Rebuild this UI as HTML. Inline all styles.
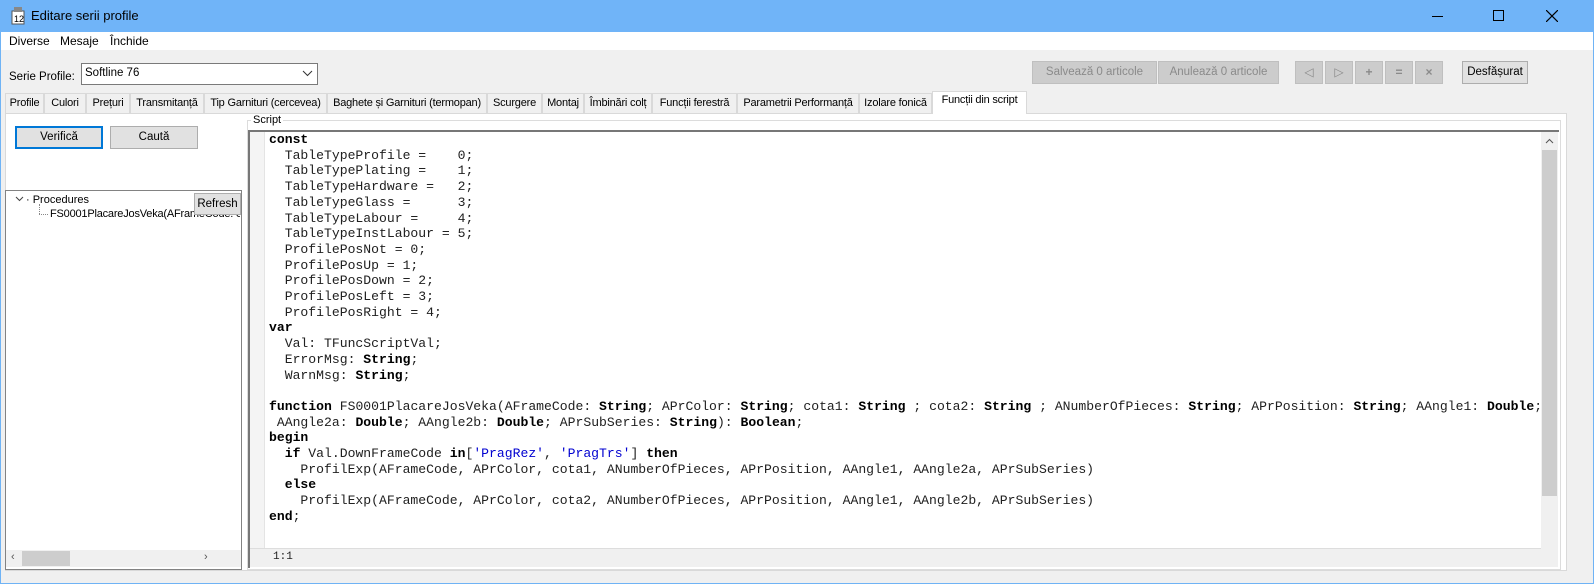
<!DOCTYPE html>
<html><head><meta charset="utf-8"><style>
*{box-sizing:border-box;margin:0;padding:0}
body{width:1594px;height:584px;overflow:hidden;background:#f0f0f0;font-family:"Liberation Sans",sans-serif;font-size:12px;color:#000;position:relative}
.abs{position:absolute}
.win{left:0;top:0;width:1594px;height:584px;border:1px solid #6fb3f5}
.title{left:0;top:0;width:1594px;height:32px;background:#70b4f8}
.menu{left:1px;top:32px;width:1592px;height:18px;background:#fff}
.btn{position:absolute;background:#e1e1e1;border:1px solid #adadad;text-align:center;line-height:20px;font-size:12px}
.dis{background:#cccccc;border-color:#bfbfbf;color:#8a8a8a}
.tab{position:absolute;top:93px;height:20px;border:1px solid #d9d9d9;border-bottom:none;background:#f0f0f0;line-height:19px;text-align:center;font-size:11px;letter-spacing:-0.2px;white-space:nowrap;overflow:hidden}
pre{font-family:"Liberation Mono",monospace;font-size:13.1px;line-height:15.7px;color:#202020}
b{color:#000}
.s{color:#0000d0}
</style></head><body>
<div class="abs win"></div>
<div class="abs title"></div>
<svg class="abs" style="left:11px;top:6px" width="14" height="19"><rect x="1" y="5" width="12" height="13" fill="#fff" stroke="#555"/><rect x="3" y="1" width="8" height="5" fill="#888"/><text x="3" y="16" font-size="9" font-family="Liberation Sans">12</text></svg>
<div class="abs" style="left:31px;top:8px;font-size:13px">Editare serii profile</div>
<div class="abs" style="left:1432px;top:16px;width:11px;height:1px;background:#000"></div>
<div class="abs" style="left:1493px;top:10px;width:11px;height:11px;border:1px solid #000"></div>
<svg class="abs" style="left:1546px;top:10px" width="12" height="12"><path d="M0 0L12 12M12 0L0 12" stroke="#000" stroke-width="1.2"/></svg>
<div class="abs menu"></div>
<div class="abs" style="left:9px;top:34px;font-size:12px">Diverse</div>
<div class="abs" style="left:60px;top:34px;font-size:12px">Mesaje</div>
<div class="abs" style="left:110px;top:34px;font-size:12px">Închide</div>

<div class="abs" style="left:9px;top:71px;font-size:11.5px">Serie Profile:</div>
<div class="abs" style="left:81px;top:63px;width:237px;height:22px;background:#fff;border:1px solid #7a7a7a;padding:3px 3px;font-size:11.5px">Softline 76</div>
<svg class="abs" style="left:302px;top:70px" width="11" height="7"><path d="M1 1L5.5 5.5L10 1" stroke="#333" fill="none"/></svg>

<div class="btn dis" style="left:1032px;top:61px;width:125px;height:23px;font-size:11.5px">Salvează 0 articole</div>
<div class="btn dis" style="left:1158px;top:61px;width:121px;height:23px;font-size:11.5px">Anulează 0 articole</div>
<div class="btn dis" style="left:1295px;top:61px;width:28px;height:23px">◁</div>
<div class="btn dis" style="left:1325px;top:61px;width:28px;height:23px">▷</div>
<div class="btn dis" style="left:1355px;top:61px;width:28px;height:23px;font-weight:bold">+</div>
<div class="btn dis" style="left:1385px;top:61px;width:28px;height:23px;font-weight:bold">=</div>
<div class="btn dis" style="left:1415px;top:61px;width:28px;height:23px;font-weight:bold">×</div>
<div class="btn" style="left:1462px;top:61px;width:66px;height:23px;font-size:11.5px">Desfășurat</div>

<div class="abs" style="left:5px;top:113px;width:1562px;height:458px;background:#fff;border:1px solid #d9d9d9"></div>
<div class="tab" style="left:5px;width:39px">Profile</div>
<div class="tab" style="left:44px;width:42px">Culori</div>
<div class="tab" style="left:86px;width:44px">Prețuri</div>
<div class="tab" style="left:130px;width:74px">Transmitanță</div>
<div class="tab" style="left:204px;width:123px">Tip Garnituri (cercevea)</div>
<div class="tab" style="left:327px;width:160px">Baghete și Garnituri (termopan)</div>
<div class="tab" style="left:487px;width:55px">Scurgere</div>
<div class="tab" style="left:542px;width:42px">Montaj</div>
<div class="tab" style="left:584px;width:68px">Îmbinări colț</div>
<div class="tab" style="left:652px;width:85px">Funcții ferestră</div>
<div class="tab" style="left:737px;width:122px">Parametrii Performanță</div>
<div class="tab" style="left:859px;width:73px">Izolare fonică</div>
<div class="tab" style="left:932px;top:91px;height:23px;width:95px;background:#fff;line-height:17px">Funcții din script</div>

<div class="btn" style="left:15px;top:126px;width:88px;height:23px;border:2px solid #0078d7;line-height:19px;font-size:11.5px">Verifică</div>
<div class="btn" style="left:110px;top:126px;width:88px;height:23px;font-size:11.5px">Caută</div>

<div class="abs" style="left:5px;top:190px;width:237px;height:380px;background:#fff;border:1px solid #828282"></div>
<svg class="abs" style="left:15px;top:196px" width="9" height="6"><path d="M1 1L4.5 4.5L8 1" stroke="#444" fill="none"/></svg>
<div class="abs" style="left:26px;top:194px;font-size:11px">· Procedures</div>
<div class="abs" style="left:39px;top:204px;width:1px;height:10px;border-left:1px dotted #888"></div>
<div class="abs" style="left:39px;top:214px;width:9px;border-top:1px dotted #888"></div>
<div class="abs" style="left:50px;top:208px;font-size:11px;letter-spacing:-0.2px;white-space:nowrap;width:190px;overflow:hidden">FS0001PlacareJosVeka(AFrameCode: St</div>
<div class="btn" style="left:194px;top:193px;width:47px;height:22px;font-size:11.5px">Refresh</div>
<div class="abs" style="left:6px;top:550px;width:235px;height:17px;background:#f0f0f0"></div>
<div class="abs" style="left:22px;top:551px;width:48px;height:15px;background:#cdcdcd"></div>
<div class="abs" style="left:11px;top:551px;font-size:11px;color:#555">‹</div>
<div class="abs" style="left:204px;top:551px;font-size:11px;color:#555">›</div>

<div class="abs" style="left:247px;top:120px;width:1314px;height:450px;border:1px solid #dcdcdc"></div>
<div class="abs" style="left:251px;top:114px;background:#fff;padding:0 2px;font-size:11px">Script</div>
<div class="abs" style="left:248px;top:130px;width:1311px;height:438px;background:#fff;border-top:2px solid #777;border-left:2px solid #777"></div>
<div class="abs" style="left:250px;top:132px;width:15px;height:417px;background:#f4f4f4;border-right:1px solid #e4e4e4"></div>
<div class="abs" style="left:250px;top:548px;width:1291px;height:19px;background:#f0f0f0;border-top:1px solid #ddd"></div>
<pre class="abs" style="left:273px;top:550px;font-size:11px">1:1</pre>
<div class="abs" style="left:1541px;top:132px;width:17px;height:435px;background:#f0f0f0"></div>
<div class="abs" style="left:1542px;top:150px;width:15px;height:346px;background:#cdcdcd"></div>
<svg class="abs" style="left:1545px;top:138px" width="9" height="6"><path d="M1 5L4.5 1.5L8 5" stroke="#555" fill="none"/></svg>

<pre class="abs" style="left:269px;top:132px"><b>const</b>
  TableTypeProfile =    0;
  TableTypePlating =    1;
  TableTypeHardware =   2;
  TableTypeGlass =      3;
  TableTypeLabour =     4;
  TableTypeInstLabour = 5;
  ProfilePosNot = 0;
  ProfilePosUp = 1;
  ProfilePosDown = 2;
  ProfilePosLeft = 3;
  ProfilePosRight = 4;
<b>var</b>
  Val: TFuncScriptVal;
  ErrorMsg: <b>String</b>;
  WarnMsg: <b>String</b>;

<b>function</b> FS0001PlacareJosVeka(AFrameCode: <b>String</b>; APrColor: <b>String</b>; cota1: <b>String</b> ; cota2: <b>String</b> ; ANumberOfPieces: <b>String</b>; APrPosition: <b>String</b>; AAngle1: <b>Double</b>;
 AAngle2a: <b>Double</b>; AAngle2b: <b>Double</b>; APrSubSeries: <b>String</b>): <b>Boolean</b>;
<b>begin</b>
  <b>if</b> Val.DownFrameCode <b>in</b>[<span class="s">'PragRez'</span>, <span class="s">'PragTrs'</span>] <b>then</b>
    ProfilExp(AFrameCode, APrColor, cota1, ANumberOfPieces, APrPosition, AAngle1, AAngle2a, APrSubSeries)
  <b>else</b>
    ProfilExp(AFrameCode, APrColor, cota2, ANumberOfPieces, APrPosition, AAngle1, AAngle2b, APrSubSeries)
<b>end</b>;</pre>
</body></html>
